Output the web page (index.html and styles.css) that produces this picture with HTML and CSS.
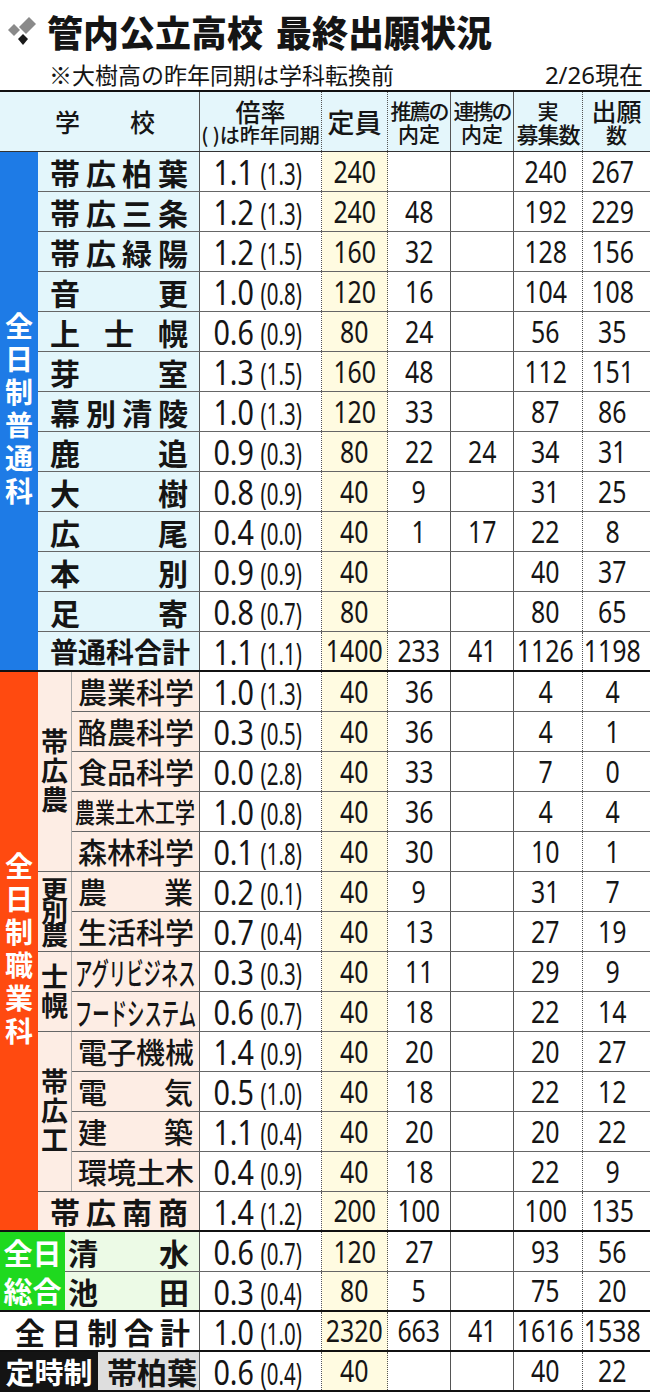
FILE: index.html
```html
<!DOCTYPE html>
<html lang="ja">
<head>
<meta charset="utf-8">
<title>管内公立高校 最終出願状況</title>
<link rel="stylesheet" href="styles.css">
</head>
<body>
<div class="top">
  <h1 class="title">
    <svg class="mark" viewBox="0 0 30 30" aria-hidden="true">
      <polygon points="0,14 6,8 12,14 6,20" fill="#8a8a8a"/>
      <polygon points="21,1 28,8 18,18 11,11" fill="#8a8a8a"/>
      <polygon points="15,18 20,23 15,29 10,23" fill="#1a1a1a"/>
    </svg>
    <span>管内公立高校</span><span class="t2">最終出願状況</span>
  </h1>
  <div class="subline">
    <span class="note">※大樹高の昨年同期は学科転換前</span>
    <span class="date"><span class="dn">2/26</span>現在</span>
  </div>
</div>

<div class="table">
  <div class="thead">
    <div class="h-school"><span>学校</span></div>
    <div class="hn">
      <div class="h-ratio"><span class="hr1">倍率</span><span class="hr2">( )は昨年同期</span></div>
      <div class="h-cap"><span>定員</span></div>
      <div><span class="tight">推薦の</span><span>内定</span></div>
      <div><span class="tight">連携の</span><span>内定</span></div>
      <div><span>実</span><span class="tight1">募集数</span></div>
      <div><span class="big">出願</span><span>数</span></div>
    </div>
  </div>

  <section class="sec gen">
    <div class="band blue"><span class="vt">全日制普通科</span></div>
    <div class="rows">
      <div class="row"><div class="name"><span class="nm">帯広柏葉</span></div><div class="nums"><div class="c r"><span class="rg"><span class="rm">1.1</span><span class="rp">(1.3)</span></span></div><div class="c"><span class="n">240</span></div><div class="c"></div><div class="c"></div><div class="c"><span class="n">240</span></div><div class="c"><span class="n">267</span></div></div></div>
      <div class="row"><div class="name"><span class="nm">帯広三条</span></div><div class="nums"><div class="c r"><span class="rg"><span class="rm">1.2</span><span class="rp">(1.3)</span></span></div><div class="c"><span class="n">240</span></div><div class="c"><span class="n">48</span></div><div class="c"></div><div class="c"><span class="n">192</span></div><div class="c"><span class="n">229</span></div></div></div>
      <div class="row"><div class="name"><span class="nm">帯広緑陽</span></div><div class="nums"><div class="c r"><span class="rg"><span class="rm">1.2</span><span class="rp">(1.5)</span></span></div><div class="c"><span class="n">160</span></div><div class="c"><span class="n">32</span></div><div class="c"></div><div class="c"><span class="n">128</span></div><div class="c"><span class="n">156</span></div></div></div>
      <div class="row"><div class="name"><span class="nm">音更</span></div><div class="nums"><div class="c r"><span class="rg"><span class="rm">1.0</span><span class="rp">(0.8)</span></span></div><div class="c"><span class="n">120</span></div><div class="c"><span class="n">16</span></div><div class="c"></div><div class="c"><span class="n">104</span></div><div class="c"><span class="n">108</span></div></div></div>
      <div class="row"><div class="name"><span class="nm">上士幌</span></div><div class="nums"><div class="c r"><span class="rg"><span class="rm">0.6</span><span class="rp">(0.9)</span></span></div><div class="c"><span class="n">80</span></div><div class="c"><span class="n">24</span></div><div class="c"></div><div class="c"><span class="n">56</span></div><div class="c"><span class="n">35</span></div></div></div>
      <div class="row"><div class="name"><span class="nm">芽室</span></div><div class="nums"><div class="c r"><span class="rg"><span class="rm">1.3</span><span class="rp">(1.5)</span></span></div><div class="c"><span class="n">160</span></div><div class="c"><span class="n">48</span></div><div class="c"></div><div class="c"><span class="n">112</span></div><div class="c"><span class="n">151</span></div></div></div>
      <div class="row"><div class="name"><span class="nm">幕別清陵</span></div><div class="nums"><div class="c r"><span class="rg"><span class="rm">1.0</span><span class="rp">(1.3)</span></span></div><div class="c"><span class="n">120</span></div><div class="c"><span class="n">33</span></div><div class="c"></div><div class="c"><span class="n">87</span></div><div class="c"><span class="n">86</span></div></div></div>
      <div class="row"><div class="name"><span class="nm">鹿追</span></div><div class="nums"><div class="c r"><span class="rg"><span class="rm">0.9</span><span class="rp">(0.3)</span></span></div><div class="c"><span class="n">80</span></div><div class="c"><span class="n">22</span></div><div class="c"><span class="n">24</span></div><div class="c"><span class="n">34</span></div><div class="c"><span class="n">31</span></div></div></div>
      <div class="row"><div class="name"><span class="nm">大樹</span></div><div class="nums"><div class="c r"><span class="rg"><span class="rm">0.8</span><span class="rp">(0.9)</span></span></div><div class="c"><span class="n">40</span></div><div class="c"><span class="n">9</span></div><div class="c"></div><div class="c"><span class="n">31</span></div><div class="c"><span class="n">25</span></div></div></div>
      <div class="row"><div class="name"><span class="nm">広尾</span></div><div class="nums"><div class="c r"><span class="rg"><span class="rm">0.4</span><span class="rp">(0.0)</span></span></div><div class="c"><span class="n">40</span></div><div class="c"><span class="n">1</span></div><div class="c"><span class="n">17</span></div><div class="c"><span class="n">22</span></div><div class="c"><span class="n">8</span></div></div></div>
      <div class="row"><div class="name"><span class="nm">本別</span></div><div class="nums"><div class="c r"><span class="rg"><span class="rm">0.9</span><span class="rp">(0.9)</span></span></div><div class="c"><span class="n">40</span></div><div class="c"></div><div class="c"></div><div class="c"><span class="n">40</span></div><div class="c"><span class="n">37</span></div></div></div>
      <div class="row"><div class="name"><span class="nm">足寄</span></div><div class="nums"><div class="c r"><span class="rg"><span class="rm">0.8</span><span class="rp">(0.7)</span></span></div><div class="c"><span class="n">80</span></div><div class="c"></div><div class="c"></div><div class="c"><span class="n">80</span></div><div class="c"><span class="n">65</span></div></div></div>
      <div class="row"><div class="name sum"><span class="nm">普通科合計</span></div><div class="nums"><div class="c r"><span class="rg"><span class="rm">1.1</span><span class="rp">(1.1)</span></span></div><div class="c"><span class="n">1400</span></div><div class="c"><span class="n">233</span></div><div class="c"><span class="n">41</span></div><div class="c"><span class="n">1126</span></div><div class="c"><span class="n">1198</span></div></div></div>
    </div>
  </section>

  <section class="sec voc">
    <div class="band orange"><span class="vt">全日制職業科</span></div>
    <div class="rows">
      <div class="group">
        <div class="sub"><span class="vs">帯広農</span></div>
        <div class="grows">
          <div class="row"><div class="name"><span class="nm">農業科学</span></div><div class="nums"><div class="c r"><span class="rg"><span class="rm">1.0</span><span class="rp">(1.3)</span></span></div><div class="c"><span class="n">40</span></div><div class="c"><span class="n">36</span></div><div class="c"></div><div class="c"><span class="n">4</span></div><div class="c"><span class="n">4</span></div></div></div>
          <div class="row"><div class="name"><span class="nm">酪農科学</span></div><div class="nums"><div class="c r"><span class="rg"><span class="rm">0.3</span><span class="rp">(0.5)</span></span></div><div class="c"><span class="n">40</span></div><div class="c"><span class="n">36</span></div><div class="c"></div><div class="c"><span class="n">4</span></div><div class="c"><span class="n">1</span></div></div></div>
          <div class="row"><div class="name"><span class="nm">食品科学</span></div><div class="nums"><div class="c r"><span class="rg"><span class="rm">0.0</span><span class="rp">(2.8)</span></span></div><div class="c"><span class="n">40</span></div><div class="c"><span class="n">33</span></div><div class="c"></div><div class="c"><span class="n">7</span></div><div class="c"><span class="n">0</span></div></div></div>
          <div class="row"><div class="name cn"><span class="cond c6">農業土木工学</span></div><div class="nums"><div class="c r"><span class="rg"><span class="rm">1.0</span><span class="rp">(0.8)</span></span></div><div class="c"><span class="n">40</span></div><div class="c"><span class="n">36</span></div><div class="c"></div><div class="c"><span class="n">4</span></div><div class="c"><span class="n">4</span></div></div></div>
          <div class="row"><div class="name"><span class="nm">森林科学</span></div><div class="nums"><div class="c r"><span class="rg"><span class="rm">0.1</span><span class="rp">(1.8)</span></span></div><div class="c"><span class="n">40</span></div><div class="c"><span class="n">30</span></div><div class="c"></div><div class="c"><span class="n">10</span></div><div class="c"><span class="n">1</span></div></div></div>
        </div>
      </div>
      <div class="group">
        <div class="sub"><span class="vs sq">更別農</span></div>
        <div class="grows">
          <div class="row"><div class="name"><span class="nm">農業</span></div><div class="nums"><div class="c r"><span class="rg"><span class="rm">0.2</span><span class="rp">(0.1)</span></span></div><div class="c"><span class="n">40</span></div><div class="c"><span class="n">9</span></div><div class="c"></div><div class="c"><span class="n">31</span></div><div class="c"><span class="n">7</span></div></div></div>
          <div class="row"><div class="name"><span class="nm">生活科学</span></div><div class="nums"><div class="c r"><span class="rg"><span class="rm">0.7</span><span class="rp">(0.4)</span></span></div><div class="c"><span class="n">40</span></div><div class="c"><span class="n">13</span></div><div class="c"></div><div class="c"><span class="n">27</span></div><div class="c"><span class="n">19</span></div></div></div>
        </div>
      </div>
      <div class="group">
        <div class="sub"><span class="vs">士幌</span></div>
        <div class="grows">
          <div class="row"><div class="name cn"><span class="cond c7">アグリビジネス</span></div><div class="nums"><div class="c r"><span class="rg"><span class="rm">0.3</span><span class="rp">(0.3)</span></span></div><div class="c"><span class="n">40</span></div><div class="c"><span class="n">11</span></div><div class="c"></div><div class="c"><span class="n">29</span></div><div class="c"><span class="n">9</span></div></div></div>
          <div class="row"><div class="name cn"><span class="cond c7">フードシステム</span></div><div class="nums"><div class="c r"><span class="rg"><span class="rm">0.6</span><span class="rp">(0.7)</span></span></div><div class="c"><span class="n">40</span></div><div class="c"><span class="n">18</span></div><div class="c"></div><div class="c"><span class="n">22</span></div><div class="c"><span class="n">14</span></div></div></div>
        </div>
      </div>
      <div class="group">
        <div class="sub"><span class="vs">帯広工</span></div>
        <div class="grows">
          <div class="row"><div class="name"><span class="nm">電子機械</span></div><div class="nums"><div class="c r"><span class="rg"><span class="rm">1.4</span><span class="rp">(0.9)</span></span></div><div class="c"><span class="n">40</span></div><div class="c"><span class="n">20</span></div><div class="c"></div><div class="c"><span class="n">20</span></div><div class="c"><span class="n">27</span></div></div></div>
          <div class="row"><div class="name"><span class="nm">電気</span></div><div class="nums"><div class="c r"><span class="rg"><span class="rm">0.5</span><span class="rp">(1.0)</span></span></div><div class="c"><span class="n">40</span></div><div class="c"><span class="n">18</span></div><div class="c"></div><div class="c"><span class="n">22</span></div><div class="c"><span class="n">12</span></div></div></div>
          <div class="row"><div class="name"><span class="nm">建築</span></div><div class="nums"><div class="c r"><span class="rg"><span class="rm">1.1</span><span class="rp">(0.4)</span></span></div><div class="c"><span class="n">40</span></div><div class="c"><span class="n">20</span></div><div class="c"></div><div class="c"><span class="n">20</span></div><div class="c"><span class="n">22</span></div></div></div>
          <div class="row"><div class="name"><span class="nm">環境土木</span></div><div class="nums"><div class="c r"><span class="rg"><span class="rm">0.4</span><span class="rp">(0.9)</span></span></div><div class="c"><span class="n">40</span></div><div class="c"><span class="n">18</span></div><div class="c"></div><div class="c"><span class="n">22</span></div><div class="c"><span class="n">9</span></div></div></div>
        </div>
      </div>
      <div class="row"><div class="name"><span class="nm">帯広南商</span></div><div class="nums"><div class="c r"><span class="rg"><span class="rm">1.4</span><span class="rp">(1.2)</span></span></div><div class="c"><span class="n">200</span></div><div class="c"><span class="n">100</span></div><div class="c"></div><div class="c"><span class="n">100</span></div><div class="c"><span class="n">135</span></div></div></div>
    </div>
  </section>

  <section class="sec sogo">
    <div class="band green"><span class="hz">全日</span><span class="hz">総合</span></div>
    <div class="rows">
      <div class="row"><div class="name"><span class="nm">清水</span></div><div class="nums"><div class="c r"><span class="rg"><span class="rm">0.6</span><span class="rp">(0.7)</span></span></div><div class="c"><span class="n">120</span></div><div class="c"><span class="n">27</span></div><div class="c"></div><div class="c"><span class="n">93</span></div><div class="c"><span class="n">56</span></div></div></div>
      <div class="row"><div class="name"><span class="nm">池田</span></div><div class="nums"><div class="c r"><span class="rg"><span class="rm">0.3</span><span class="rp">(0.4)</span></span></div><div class="c"><span class="n">80</span></div><div class="c"><span class="n">5</span></div><div class="c"></div><div class="c"><span class="n">75</span></div><div class="c"><span class="n">20</span></div></div></div>
    </div>
  </section>

  <section class="sec total">
    <div class="rows">
      <div class="row"><div class="name"><span class="nm">全日制合計</span></div><div class="nums"><div class="c r"><span class="rg"><span class="rm">1.0</span><span class="rp">(1.0)</span></span></div><div class="c"><span class="n">2320</span></div><div class="c"><span class="n">663</span></div><div class="c"><span class="n">41</span></div><div class="c"><span class="n">1616</span></div><div class="c"><span class="n">1538</span></div></div></div>
    </div>
  </section>

  <section class="sec teiji">
    <div class="band black"><span class="hz">定時制</span></div>
    <div class="rows">
      <div class="row"><div class="name"><span class="nm">帯柏葉</span></div><div class="nums"><div class="c r"><span class="rg"><span class="rm">0.6</span><span class="rp">(0.4)</span></span></div><div class="c"><span class="n">40</span></div><div class="c"></div><div class="c"></div><div class="c"><span class="n">40</span></div><div class="c"><span class="n">22</span></div></div></div>
    </div>
  </section>
</div>
</body>
</html>
```

FILE: styles.css
```css
* { box-sizing: border-box; margin: 0; padding: 0; }
html, body { background: #fff; }
body {
  width: 650px;
  height: 1394px;
  overflow: hidden;
  font-family: "Noto Sans CJK JP", "Noto Sans", sans-serif;
  color: #151515;
}

/* ---------- title block ---------- */
.top { height: 90px; }
.title {
  display: flex;
  align-items: center;
  height: 58px;
  padding: 4px 0 0 8px;
  font-size: 36px;
  font-weight: 900;
  line-height: 1;
}
.mark { width: 30px; height: 30px; margin-right: 9px; flex: none; }
.t2 { margin-left: 13px; }
.subline {
  display: flex;
  justify-content: space-between;
  align-items: center;
  height: 32px;
  padding: 0 7px 0 49px;
  font-size: 23px;
  font-weight: 400;
  line-height: 1;
}
.date { font-size: 24px; }
.dn { font-family: "Noto Sans", sans-serif; font-weight: 400; }

/* ---------- table ---------- */
.table { border-top: 2px solid #111; }

.thead {
  display: flex;
  height: 60px;
  background: #e4f6fb;
  border-bottom: 1px solid #333;
}
.h-school {
  width: 200px;
  flex: none;
  display: flex;
  align-items: center;
  padding: 0 44px 0 55px;
  border-right: 1px solid #555;
  font-size: 25px;
  font-weight: 500;
}
.h-school span { flex: 1; text-align: justify; text-align-last: justify; line-height: 1; }

.hn, .nums {
  display: grid;
  grid-template-columns: 122px 66px 63px 63px 69px 67px;
  width: 450px;
  flex: none;
}
.hn > div {
  display: flex;
  flex-direction: column;
  align-items: center;
  justify-content: center;
  line-height: 23px;
  font-size: 21px;
  font-weight: 500;
  white-space: nowrap;
}
.hn .hr1 { font-size: 25px; line-height: 25px; }
.hn .hr2 { font-size: 20px; line-height: 21px; }
.hn .h-cap span { font-size: 27px; }
.hn .tight { letter-spacing: -2px; }
.hn .tight1 { letter-spacing: -1px; font-size: 22px; }
.hn .big { font-size: 25px; line-height: 25px; }

.hn > :nth-child(1), .nums > :nth-child(1) { border-right: 1px dotted #555; }
.hn > :nth-child(2), .nums > :nth-child(2) { border-right: 1px dotted #555; }
.hn > :nth-child(3), .nums > :nth-child(3) { border-right: 1px solid #555; }
.hn > :nth-child(4), .nums > :nth-child(4) { border-right: 1px solid #555; }
.hn > :nth-child(5), .nums > :nth-child(5) { border-right: 1px dotted #555; }

/* ---------- sections ---------- */
.sec { display: flex; border-bottom: 2px solid #111; }
.band {
  flex: none;
  display: flex;
  align-items: center;
  justify-content: center;
  color: #fff;
  font-weight: 700;
  overflow: hidden;
}
.blue { width: 38px; background: #1e7be6; }
.orange { width: 38px; background: #ff4a10; }
.green { width: 65px; background: #1fd91f; flex-direction: column; }
.black { width: 98px; background: #141414; }
.vt {
  writing-mode: vertical-rl;
  text-orientation: upright;
  font-size: 28px;
  letter-spacing: 5px;
  line-height: 1;
}
.hz { font-size: 29px; line-height: 38px; display: block; }
.black .hz { line-height: 36px; }

.rows { flex: 1; min-width: 0; display: flex; flex-direction: column; }
.row { display: flex; height: 40px; border-bottom: 1px solid #666; flex: none; }
.rows > .row:last-child { height: 38px; border-bottom: none; }

.group { display: flex; border-bottom: 1px solid #666; }
.sub {
  width: 34px;
  flex: none;
  display: flex;
  align-items: center;
  justify-content: center;
  background: #fdede4;
  border-right: 1px solid #aaa;
  font-weight: 700;
  overflow: hidden;
}
.vs {
  writing-mode: vertical-rl;
  text-orientation: upright;
  font-size: 27px;
  letter-spacing: 2px;
  line-height: 1;
}
.vs.sq { letter-spacing: -2px; transform: scaleY(0.92); }
.grows { flex: 1; min-width: 0; display: flex; flex-direction: column; }
.grows > .row:last-child { height: 39px; border-bottom: none; }

.name {
  flex: 1;
  min-width: 0;
  display: flex;
  align-items: center;
  border-right: 1px solid #555;
  padding: 0 11px 0 12px;
}
.nm {
  flex: 1;
  text-align: justify;
  text-align-last: justify;
  line-height: 1;
  font-size: 30px;
  font-weight: 700;
  white-space: nowrap;
}
.gen .name { background: #e3f6fb; }
.gen .name.sum .nm { font-size: 28px; }
.voc .name { background: #fdede4; }
.voc .grows .name { padding: 0 6px 0 6px; }
.voc .grows .name.cn { padding-left: 3px; }
.voc .grows .nm { font-size: 29px; font-weight: 500; }
.cond {
  display: inline-block;
  white-space: nowrap;
  line-height: 1;
  transform-origin: left center;
}
.c6 { font-size: 27px; transform: scaleX(0.74); font-weight: 500; }
.c7 { font-size: 31px; transform: scaleX(0.56); font-weight: 500; }

.sogo .name { background: #ecfae6; padding: 0 10px 0 3px; }
.total .name { background: #fff; padding: 0 9px 0 15px; }
.teiji .name { background: #dedede; padding: 0 8px 0 9px; }

/* ---------- numbers ---------- */
.c {
  display: flex;
  align-items: center;
  justify-content: center;
  background: #fff;
}
.nums > :nth-child(2) { background: #fffbe1; }
.nums > :nth-child(5) { padding-right: 5px; }
.nums > :nth-child(6) { padding-right: 8px; }

.n {
  display: inline-block;
  font-family: "Noto Sans", sans-serif;
  font-size: 30px;
  line-height: 1;
  transform: scaleX(0.83);
  white-space: nowrap;
}
.rg { white-space: nowrap; line-height: 1; font-size: 30px; }
.rm, .rp {
  display: inline-block;
  font-family: "Noto Sans", sans-serif;
  line-height: 1;
}
.rm { font-size: 35px; transform: scaleX(0.82); }
.rp { font-size: 31px; transform: scaleX(0.66); margin-left: -9px; }
```
